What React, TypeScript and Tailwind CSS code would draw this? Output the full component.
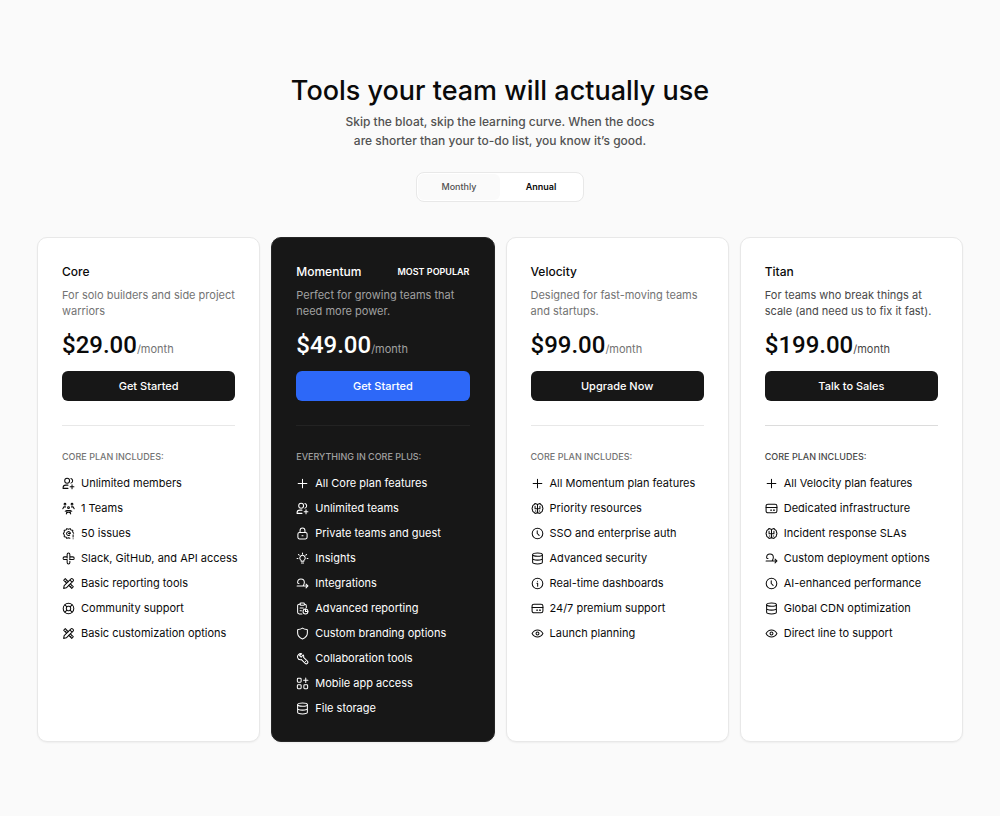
import { useState } from 'react';
import type { ReactNode } from 'react';
import { clsx } from 'clsx';

const icons: Record<string, ReactNode> = {
  plus: <path d="M12 4v16M4 12h16" />,
  userPlus: (
    <>
      <circle cx="9.5" cy="7" r="4.5" />
      <path d="M2 21v-1a5 5 0 0 1 5-5h4M2 21h9M16.5 2.7a4.5 4.5 0 0 1 0 8.6M18.5 14.5v7M15 18h7" />
    </>
  ),
  teams: (
    <>
      <circle cx="5.5" cy="4" r="1.6" />
      <circle cx="18.5" cy="4" r="1.6" />
      <circle cx="12" cy="10.5" r="1.7" />
      <path d="M1.5 12.5l2-3.5h3M22.5 12.5l-2-3.500h-3M6 17l3-1.500h6l3 1.5M9.5 16L8 22M14.5 16l1.5 6M9.5 20l2.500-1.500 2.500 1.500" />
    </>
  ),
  gear: (
    <>
      <path d="M21.5 11.5l-1.8-2.2.2-3.2-3.2-.6L15 3l-3 1.200L9 3 7.300 5.500l-3.200.6.2 3.2L2.5 12l1.8 2.700-.2 3.200 3.200.6L9 21l3-1.200 2.500 1M20.500 14.500v4M20.500 21.500v.3" />
      <path d="M15.5 12.2a3.5 3.5 0 1 0-1.300 2.600M12 12.200h3.500" />
    </>
  ),
  slack: (
    <path d="M9.5 9V4.500a2.500 2.500 0 0 1 5 0V9H20a2.500 2.500 0 0 1 0 5h-6M9.500 9H4.500a2.500 2.500 0 0 0 0 5h5v5.500a2.500 2.500 0 0 0 5 0V17M9.500 9v2M14.500 9v3" />
  ),
  tools: (
    <>
      <path d="M8.5 11.5L3 6l3-3 5.5 5.5M15.5 12.5L21 18l-3 3-5.5-5.5M7.5 7.5L6 9M18 15.5L16.5 17" />
      <path d="M3 21l1-5L16.5 3.5a2 2 0 0 1 3 0l1 1a2 2 0 0 1 0 3L8 20zM14.5 5.5l4 4" />
    </>
  ),
  lifebuoy: (
    <>
      <circle cx="12" cy="12" r="9.8" />
      <rect x="8" y="8" width="8" height="8" rx="3" />
      <path d="M5.5 5.5L9 9M18.5 5.5L15 9M5.5 18.5L9 15M18.5 18.5L15 15" />
    </>
  ),
  lock: (
    <>
      <rect x="3.5" y="10" width="17" height="12" rx="3" />
      <path d="M7.5 10V6.5a4.5 4.5 0 0 1 9 0V10M11 16h2" />
    </>
  ),
  bulb: (
    <path d="M9.5 17v-1.500a5 5 0 1 1 5 0V17zM10 20.500h4M12 2v1.500M4.500 4.500L6 6M19.500 4.500L18 6M2 12h1.500M20.500 12H22" />
  ),
  route: <path d="M3 10a6.200 6.200 0 0 1 12.400 0c0 2.500-1 4.500-2.400 6.500M2 16.500h20M18.500 13l3.500 3.500-3.500 3.500M3 10c0 1.500 1 2 2.500 2" />,
  report: (
    <>
      <path d="M8 4H6a3 3 0 0 0-3 3v12a3 3 0 0 0 3 3h5M16 4a3 3 0 0 1 3 3v3M7.5 11h6M7.5 16H10" />
      <rect x="7.5" y="2" width="8" height="4" rx="1.5" />
      <circle cx="17.5" cy="17.5" r="4.5" />
      <path d="M17.5 13v4.5H22" />
    </>
  ),
  shield: (
    <path d="M12 2c2.5 1.8 5 2.5 8 2.5.6 0 1 .4 1 1V11c0 6-4.500 9-9 11-4.500-2-9-5-9-11V5.500c0-.6.4-1 1-1 3 0 5.500-.7 8-2.500z" />
  ),
  wrench: (
    <>
      <path d="M10.5 3.2A6 6 0 0 0 3 10.500c1 3 4 4.500 7 3.500l7 7a2.600 2.600 0 0 0 4-4l-7-7a6 6 0 0 0-.5-4.500L9.500 9.500l-3-3z" />
      <path d="M17.5 17.5h.1" />
    </>
  ),
  apps: (
    <>
      <rect x="2.5" y="2.5" width="7" height="7" rx="1.5" />
      <rect x="2.5" y="14.5" width="7" height="7" rx="1.5" />
      <rect x="14.5" y="14.5" width="7" height="7" rx="1.5" />
      <path d="M18 2v8M14 6h8" />
    </>
  ),
  database: (
    <>
      <ellipse cx="12" cy="5" rx="9" ry="3" />
      <path d="M3 5v14c0 1.7 4 3 9 3s9-1.3 9-3V5M3 12c0 1.7 4 3 9 3s9-1.3 9-3" />
    </>
  ),
  brain: (
    <path d="M12 5.5A3.500 3.500 0 0 0 5.500 5 3.500 3.500 0 0 0 3 9.500a3.500 3.500 0 0 0 0 5A3.500 3.500 0 0 0 5.500 19a3.500 3.500 0 0 0 6.500-.5zM12 5.500A3.500 3.500 0 0 1 18.500 5 3.500 3.500 0 0 1 21 9.500a3.500 3.500 0 0 1 0 5 3.500 3.500 0 0 1-2.500 4.500 3.500 3.500 0 0 1-6.500-.5M7.500 8v4.500h9V8M8 16.500h1M16 16.500h-1" />
  ),
  clock: (
    <>
      <circle cx="12" cy="12" r="9.8" />
      <path d="M11.5 7v5l3.5 3.5" />
    </>
  ),
  info: (
    <>
      <circle cx="12" cy="12" r="9.8" />
      <path d="M11 11.5h1.3V17M12 7.8v.2" />
    </>
  ),
  card: (
    <>
      <rect x="2" y="4" width="20" height="16" rx="3.5" />
      <path d="M2 10h20M10.5 15H12M15.5 15h2" />
    </>
  ),
  eye: (
    <>
      <path d="M2 12c2.5-4.500 6-6.500 10-6.500s7.500 2 10 6.500c-2.500 4.500-6 6.500-10 6.500S4.500 16.500 2 12z" />
      <circle cx="12" cy="12" r="2.7" />
    </>
  ),
};

const plans = [
  {
    name: 'Core',
    description: 'For solo builders and side project warriors',
    price: '$29.00',
    cta: 'Get Started',
    label: 'Core plan includes:',
    features: [
      ['userPlus', 'Unlimited members'],
      ['teams', '1 Teams'],
      ['gear', '50 issues'],
      ['slack', 'Slack, GitHub, and API access'],
      ['tools', 'Basic reporting tools'],
      ['lifebuoy', 'Community support'],
      ['tools', 'Basic customization options'],
    ],
  },
  {
    name: 'Momentum',
    variant: 'dark',
    badge: 'Most popular',
    description: 'Perfect for growing teams that need more power.',
    price: '$49.00',
    cta: 'Get Started',
    label: 'Everything in core plus:',
    features: [
      ['plus', 'All Core plan features'],
      ['userPlus', 'Unlimited teams'],
      ['lock', 'Private teams and guest'],
      ['bulb', 'Insights'],
      ['route', 'Integrations'],
      ['report', 'Advanced reporting'],
      ['shield', 'Custom branding options'],
      ['wrench', 'Collaboration tools'],
      ['apps', 'Mobile app access'],
      ['database', 'File storage'],
    ],
  },
  {
    name: 'Velocity',
    description: 'Designed for fast-moving teams and startups.',
    price: '$99.00',
    cta: 'Upgrade Now',
    label: 'Core plan includes:',
    features: [
      ['plus', 'All Momentum plan features'],
      ['brain', 'Priority resources'],
      ['clock', 'SSO and enterprise auth'],
      ['database', 'Advanced security'],
      ['info', 'Real-time dashboards'],
      ['card', '24/7 premium support'],
      ['eye', 'Launch planning'],
    ],
  },
  {
    name: 'Titan',
    variant: 'strong',
    description: 'For teams who break things at scale (and need us to fix it fast).',
    price: '$199.00',
    cta: 'Talk to Sales',
    label: 'Core plan includes:',
    features: [
      ['plus', 'All Velocity plan features'],
      ['card', 'Dedicated infrastructure'],
      ['brain', 'Incident response SLAs'],
      ['route', 'Custom deployment options'],
      ['clock', 'AI-enhanced performance'],
      ['database', 'Global CDN optimization'],
      ['eye', 'Direct line to support'],
    ],
  },
];

const periods = ['Monthly', 'Annual'];

function Icon({ name }: { name: string }) {
  return (
    <svg
      viewBox="0 0 24 24"
      className="size-[13px] shrink-0"
      fill="none"
      stroke="currentColor"
      strokeWidth="1.9"
      strokeLinecap="round"
      strokeLinejoin="round"
      aria-hidden="true"
    >
      {icons[name]}
    </svg>
  );
}

function PlanCard({ plan }: { plan: (typeof plans)[number] }) {
  const dark = plan.variant === 'dark';
  const muted = dark ? 'text-[#a1a1a1]' : plan.variant === 'strong' ? 'text-[#484848]' : 'text-[#737373]';

  return (
    <article
      className={clsx(
        'rounded-[10px] border px-6 pt-6 pb-[25px] shadow-xs',
        dark ? 'border-[#262626] bg-[#171717] text-white' : 'border-[#e8e8e8] bg-white text-[#0a0a0a]'
      )}
    >
      <div className="flex items-center justify-between">
        <h2 className="text-[12px] leading-5 font-medium">{plan.name}</h2>
        {plan.badge && <span className="text-[9px] font-semibold uppercase">{plan.badge}</span>}
      </div>
      <p className={clsx('mt-[5px] min-h-8 text-[11px] leading-4', muted)}>{plan.description}</p>
      <p className="mt-2.5 flex h-8 items-baseline leading-8">
        <span className="font-[Roboto,sans-serif] text-[24px] font-medium">{plan.price}</span>
        <span className={clsx('text-[11px]', muted)}>/month</span>
      </p>
      <button
        type="button"
        className={clsx(
          'mt-2.5 h-[30px] w-full rounded-md text-[11px] font-medium text-white',
          dark ? 'bg-[#2d68f8]' : 'bg-[#171717]'
        )}
      >
        {plan.cta}
      </button>
      <hr
        className={clsx(
          'my-6',
          dark ? 'border-[#232323]' : plan.variant === 'strong' ? 'border-[#dcdcdc]' : 'border-[#e8e8e8]'
        )}
      />
      <h3 className={clsx('text-[9px] leading-[14px] font-medium uppercase', muted)}>{plan.label}</h3>
      <ul className="mt-3 flex flex-col gap-2.5">
        {plan.features.map(([icon, text]) => (
          <li key={text} className="flex items-center gap-1.5 text-[11px] leading-[15px] whitespace-nowrap">
            <Icon name={icon} />
            {text}
          </li>
        ))}
      </ul>
    </article>
  );
}

export default function App() {
  const [period, setPeriod] = useState('Annual');

  return (
    <main className="min-h-screen bg-[#fafafa] px-[37px] pt-[73px] pb-[74px] font-[Inter,sans-serif] text-[#0a0a0a]">
      <header className="flex flex-col items-center text-center">
        <h1 className="text-[27px] leading-9 font-medium">Tools your team will actually use</h1>
        <p className="mt-[3px] max-w-[330px] text-[12px] leading-[19px] font-medium text-[#525252]">
          Skip the bloat, skip the learning curve. When the docs are shorter than your to-do list, you know it’s good.
        </p>
        <div className="mt-[22px] flex h-[30px] w-[168px] rounded-lg border border-[#e8e8e8] bg-white p-px">
          {periods.map((item) => (
            <button
              key={item}
              type="button"
              aria-pressed={period === item}
              onClick={() => setPeriod(item)}
              className={clsx(
                'flex-1 rounded-md text-[9px]',
                period === item ? 'bg-white font-semibold' : 'bg-[#fafafa] font-medium text-[#525252]'
              )}
            >
              {item}
            </button>
          ))}
        </div>
      </header>

      {/* Plans */}
      <section className="mt-[35px] grid grid-cols-2 gap-[11px] md:grid-cols-4">
        {plans.map((plan) => (
          <PlanCard key={plan.name} plan={plan} />
        ))}
      </section>
    </main>
  );
}
